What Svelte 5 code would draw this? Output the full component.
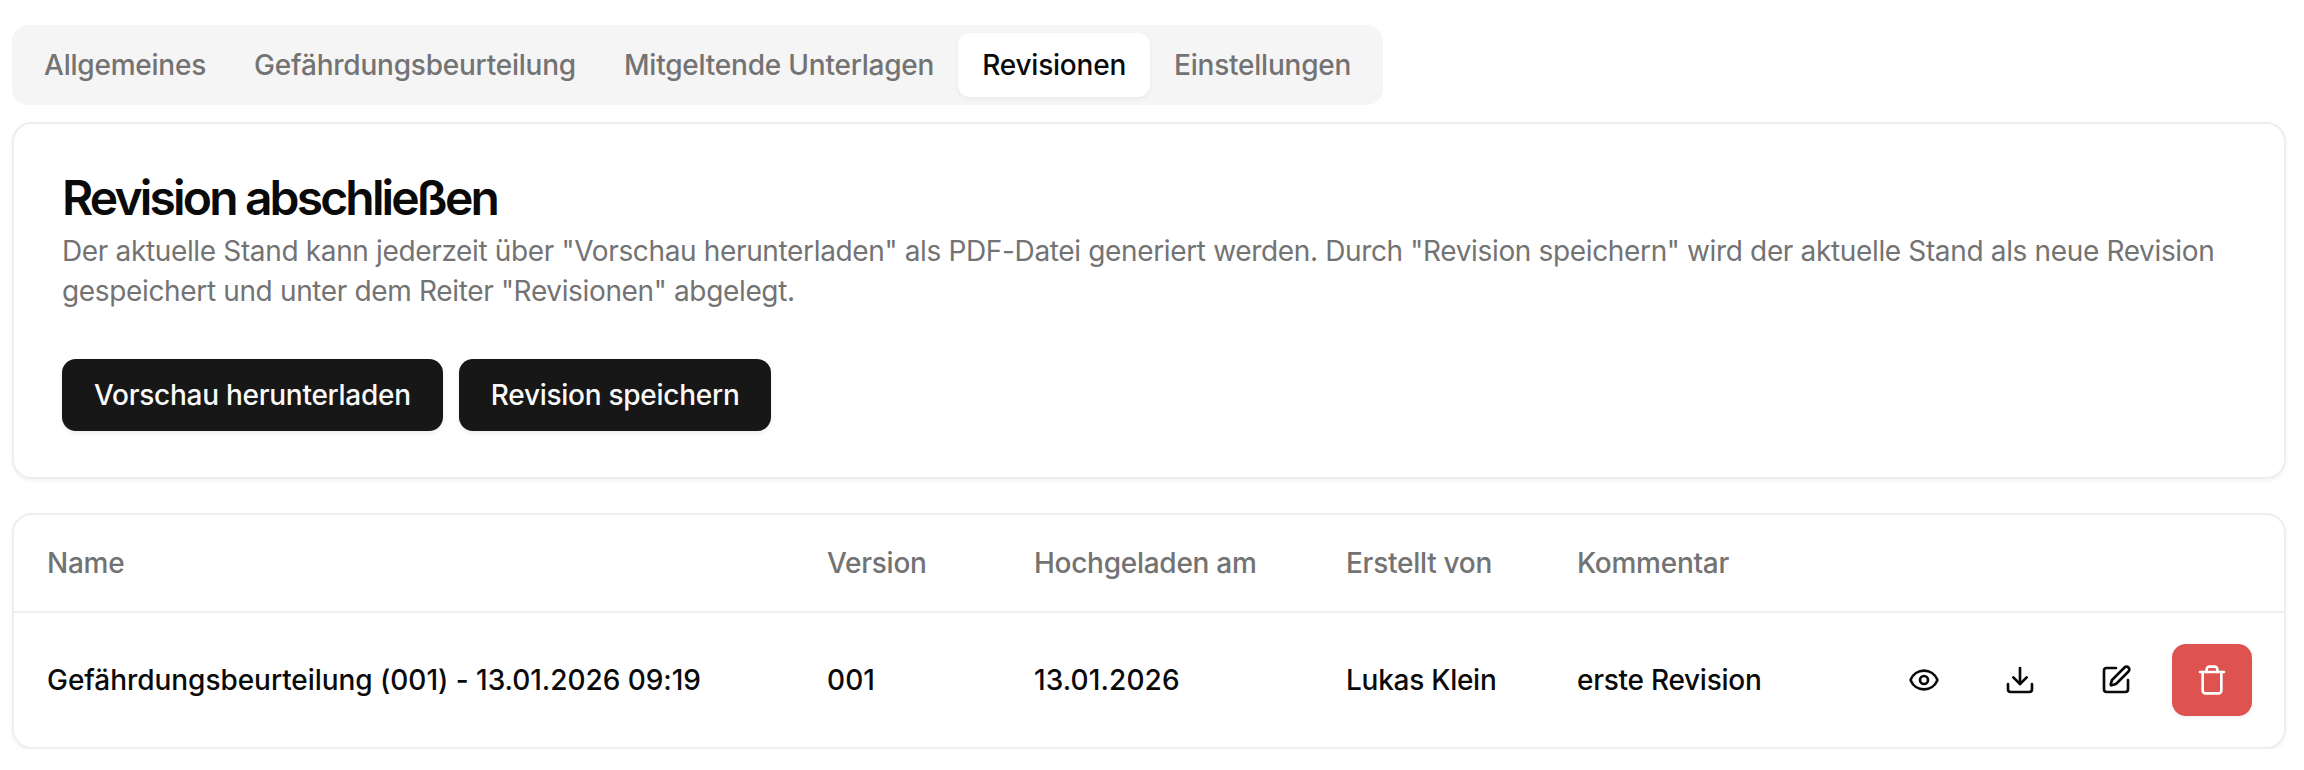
<script>
  const tabs = ["Allgemeines", "Gefährdungsbeurteilung", "Mitgeltende Unterlagen", "Revisionen", "Einstellungen"];
  let active = "Revisionen";

  const columns = ["Name", "Version", "Hochgeladen am", "Erstellt von", "Kommentar", ""];
  const rows = [
    {
      name: "Gefährdungsbeurteilung (001) - 13.01.2026 09:19",
      version: "001",
      date: "13.01.2026",
      author: "Lukas Klein",
      comment: "erste Revision",
    },
  ];
</script>

<div class="page">
  <div class="tabs">
    {#each tabs as tab}
      <button class="tab" class:active={tab === active} type="button" onclick={() => (active = tab)}>{tab}</button>
    {/each}
  </div>

  <section class="card intro">
    <h2>Revision abschließen</h2>
    <p>
      Der aktuelle Stand kann jederzeit über "Vorschau herunterladen" als PDF-Datei generiert werden. Durch "Revision speichern" wird der aktuelle Stand als neue Revision gespeichert und unter dem Reiter "Revisionen" abgelegt.
    </p>
    <div class="actions">
      <button class="primary" type="button">Vorschau herunterladen</button>
      <button class="primary" type="button">Revision speichern</button>
    </div>
  </section>

  <section class="card list">
    <div class="row head">
      {#each columns as col}
        <div>{col}</div>
      {/each}
    </div>
    {#each rows as row}
      <div class="row body">
        <div class="name">{row.name}</div>
        <div class="num">{row.version}</div>
        <div class="num">{row.date}</div>
        <div>{row.author}</div>
        <div>{row.comment}</div>
        <div class="icons">
          <button class="icon" type="button" aria-label="Ansehen">
            <svg viewBox="0 0 24 24">
              <path d="M2.062 12.348a1 1 0 0 1 0-.696 10.75 10.75 0 0 1 19.876 0 1 1 0 0 1 0 .696 10.75 10.75 0 0 1-19.876 0" />
              <circle cx="12" cy="12" r="3" />
            </svg>
          </button>
          <button class="icon" type="button" aria-label="Herunterladen">
            <svg viewBox="0 0 24 24">
              <path d="M12 15V3" />
              <path d="M21 15v4a2 2 0 0 1-2 2H5a2 2 0 0 1-2-2v-4" />
              <path d="m7 10 5 5 5-5" />
            </svg>
          </button>
          <button class="icon" type="button" aria-label="Bearbeiten">
            <svg viewBox="0 0 24 24">
              <path d="M12 3H5a2 2 0 0 0-2 2v14a2 2 0 0 0 2 2h14a2 2 0 0 0 2-2v-7" />
              <path d="M18.375 2.625a1 1 0 0 1 3 3l-9.013 9.014a2 2 0 0 1-.853.505l-2.873.84a.5.5 0 0 1-.62-.62l.84-2.873a2 2 0 0 1 .506-.852z" />
            </svg>
          </button>
          <button class="icon danger" type="button" aria-label="Löschen">
            <svg viewBox="0 0 24 24">
              <path d="M3 6h18" />
              <path d="M19 6v14c0 1-1 2-2 2H7c-1 0-2-1-2-2V6" />
              <path d="M8 6V4c0-1 1-2 2-2h4c1 0 2 1 2 2v2" />
            </svg>
          </button>
        </div>
      </div>
    {/each}
  </section>
</div>

<style>
  :global(body) {
    background: #fff;
    font-family: Inter, "Liberation Sans", sans-serif;
    color: #0a0a0a;
  }

  .page {
    padding: 25px 18px 0 12px;
    display: flex;
    flex-direction: column;
  }

  .tabs {
    align-self: flex-start;
    display: flex;
    padding: 8px;
    background: #f5f5f5;
    border-radius: 16px;
  }

  .tab {
    height: 64px;
    padding: 0 24px;
    border: none;
    border-radius: 12px;
    background: none;
    color: #737373;
    font: 450 28px/40px Inter, sans-serif;
    letter-spacing: -0.22px;
  }

  .tab.active {
    background: #fff;
    color: #0a0a0a;
    box-shadow: 0 2px 4px rgba(0, 0, 0, 0.05);
  }

  .card {
    border: 2px solid #eeeeee;
    border-radius: 20px;
    background: #fff;
    box-shadow: 0 2px 4px rgba(0, 0, 0, 0.05);
  }

  .intro {
    margin-top: 17px;
    padding: 46px 48px;
  }

  h2 {
    margin: 0;
    font-size: 48px;
    line-height: 56px;
    font-weight: 600;
    letter-spacing: -2.85px;
  }

  p {
    margin: 5px 0 0;
    color: #737373;
    font-size: 28px;
    line-height: 40px;
    letter-spacing: -0.35px;
  }

  .actions {
    display: flex;
    gap: 16px;
    margin-top: 48px;
  }

  .primary {
    height: 72px;
    padding: 0 32px;
    border: none;
    border-radius: 14px;
    background: #171717;
    color: #fafafa;
    font: 500 28px/40px Inter, sans-serif;
    letter-spacing: -0.27px;
    box-shadow: 0 2px 4px rgba(0, 0, 0, 0.08);
  }

  .list {
    margin-top: 34px;
  }

  .row {
    display: grid;
    grid-template-columns: 780px 207px 312px 231px 1fr auto;
    padding: 0 32px 0 33px;
    align-items: center;
    font-size: 28px;
    line-height: 40px;
    font-weight: 450;
    letter-spacing: -0.27px;
  }

  .head {
    height: 96px;
    color: #737373;
    border-bottom: 2px solid #eeeeee;
  }

  .body {
    height: 134px;
  }

  .name {
    letter-spacing: -0.05px;
  }

  .num {
    letter-spacing: 0.1px;
  }

  .icons {
    display: flex;
    gap: 16px;
  }

  .icon {
    width: 80px;
    height: 72px;
    display: flex;
    align-items: center;
    justify-content: center;
    border: none;
    border-radius: 14px;
    background: none;
    color: #0a0a0a;
    padding: 0;
  }

  .icon svg {
    width: 32px;
    height: 32px;
    fill: none;
    stroke: currentColor;
    stroke-width: 2;
    stroke-linecap: round;
    stroke-linejoin: round;
  }

  .danger {
    background: #de5350;
    color: #fff;
    box-shadow: 0 2px 4px rgba(0, 0, 0, 0.05);
  }
</style>
